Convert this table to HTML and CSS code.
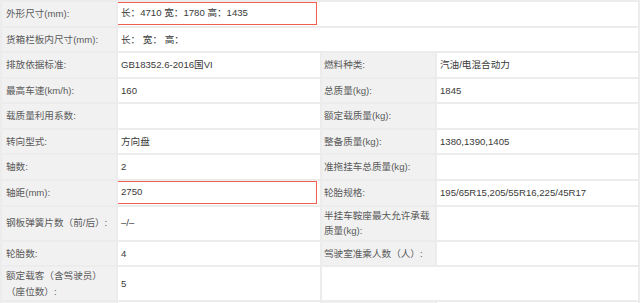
FILE: index.html
```html
<!DOCTYPE html>
<html lang="zh-CN">
<head>
<meta charset="utf-8">
<title>车辆参数</title>
<link rel="stylesheet" href="styles.css">
</head>
<body>
<table class="spec">
  <colgroup>
    <col class="c1"><col class="c2"><col class="c3"><col class="c4">
  </colgroup>
  <tbody>
    <tr>
      <td class="lbl">外形尺寸(mm):</td>
      <td class="val hl-cell" colspan="3"><div class="mark">长：4710 宽：1780 高：1435</div></td>
    </tr>
    <tr>
      <td class="lbl">货箱栏板内尺寸(mm):</td>
      <td class="val" colspan="3">长： 宽： 高：</td>
    </tr>
    <tr>
      <td class="lbl">排放依据标准:</td>
      <td class="val">GB18352.6-2016国VI</td>
      <td class="lbl r">燃料种类:</td>
      <td class="val">汽油/电混合动力</td>
    </tr>
    <tr>
      <td class="lbl">最高车速(km/h):</td>
      <td class="val">160</td>
      <td class="lbl r">总质量(kg):</td>
      <td class="val">1845</td>
    </tr>
    <tr>
      <td class="lbl">载质量利用系数:</td>
      <td class="val"></td>
      <td class="lbl r">额定载质量(kg):</td>
      <td class="val"></td>
    </tr>
    <tr>
      <td class="lbl">转向型式:</td>
      <td class="val">方向盘</td>
      <td class="lbl r">整备质量(kg):</td>
      <td class="val">1380,1390,1405</td>
    </tr>
    <tr>
      <td class="lbl">轴数:</td>
      <td class="val">2</td>
      <td class="lbl r">准拖挂车总质量(kg):</td>
      <td class="val"></td>
    </tr>
    <tr>
      <td class="lbl">轴距(mm):</td>
      <td class="val hl-cell"><div class="mark">2750</div></td>
      <td class="lbl r">轮胎规格:</td>
      <td class="val">195/65R15,205/55R16,225/45R17</td>
    </tr>
    <tr>
      <td class="lbl">钢板弹簧片数（前/后）:</td>
      <td class="val">–/–</td>
      <td class="lbl r">半挂车鞍座最大允许承载<br>质量(kg):</td>
      <td class="val"></td>
    </tr>
    <tr>
      <td class="lbl">轮胎数:</td>
      <td class="val">4</td>
      <td class="lbl r">驾驶室准乘人数（人）:</td>
      <td class="val"></td>
    </tr>
    <tr>
      <td class="lbl">额定载客（含驾驶员）<br>（座位数）:</td>
      <td class="val">5</td>
      <td class="val" colspan="2"></td>
    </tr>
    <tr>
      <td class="lbl"></td>
      <td class="val"></td>
      <td class="lbl r"></td>
      <td class="val"></td>
    </tr>
  </tbody>
</table>
</body>
</html>
```

FILE: styles.css
```css
html, body {
  margin: 0;
  padding: 0;
  background: #ffffff;
}

.spec {
  width: 640px;
  table-layout: fixed;
  border-collapse: separate;
  border-spacing: 2px;
  background: #ececec;
  font-family: "Liberation Sans", "Noto Sans CJK SC", sans-serif;
  font-size: 9.6px;
  line-height: 15.5px;
}

.c1 { width: 114px; }
.c2 { width: 202px; }
.c3 { width: 113px; }
.c4 { width: 201px; }

.spec td {
  height: 21.57px;
  padding: 1px 3px;
  vertical-align: middle;
  white-space: nowrap;
  overflow: hidden;
}

.spec td.lbl {
  background: #f1f1f1;
  color: #5a5a5a;
  padding-left: 4px;
}

.spec td.lbl.r {
  padding-left: 2px;
  padding-right: 0;
}

.spec td.val {
  background: #ffffff;
  color: #3a3a3a;
}

.spec td.hl-cell {
  padding: 0;
}

.mark {
  box-sizing: border-box;
  width: 200px;
  height: 23px;
  margin-left: -1px;
  padding: 0 3px;
  border: 1.5px solid #f0604f;
  line-height: 20px;
}
```
